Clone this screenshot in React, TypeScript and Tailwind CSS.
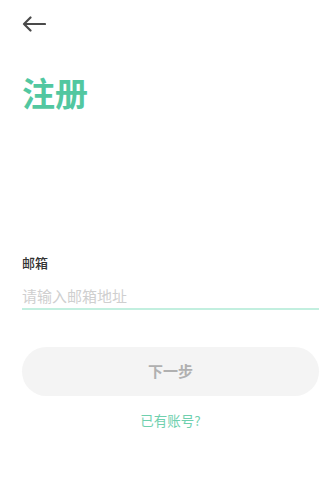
import { useState } from "react";

export default function App() {
  const [email, setEmail] = useState("");

  return (
    <div
      className="min-h-screen bg-white pl-[22px] pr-[15px]"
      style={{ fontFamily: '"Noto Sans CJK SC", "Noto Sans", sans-serif' }}
    >
      <div className="pt-[14px]">
        <button className="flex h-[20px] w-[26px] items-center">
          <svg width="24" height="16" viewBox="0 0 24 16" fill="none">
            <path
              d="M23 8H2M8.5 1.5L2 8l6.5 6.5"
              stroke="#4a4a4a"
              strokeWidth="2.2"
              strokeLinecap="round"
              strokeLinejoin="round"
            />
          </svg>
        </button>
      </div>

      <h1 className="mt-[36px] text-[33px] font-bold leading-[44px] text-[#52c7a0]">注册</h1>

      <div className="mt-[140px]">
        <label className="block text-[13px] font-medium leading-[18px] text-[#333]">邮箱</label>
        <input
          value={email}
          onChange={(e) => setEmail(e.target.value)}
          placeholder="请输入邮箱地址"
          className="mt-[11px] block h-[25px] w-full text-[15px] text-[#333] outline-none placeholder:text-[#cfcfcf]"
        />
        <div className="h-[1.5px] w-full bg-[#c2efdf]" />
      </div>

      <button className="mt-[37px] flex h-[49px] w-full items-center justify-center rounded-full bg-[#f4f4f4] text-[15px] font-bold text-[#b0b0b0]">
        下一步
      </button>

      <p className="mt-[14px] text-center text-[13.5px] text-[#6fd0ae]">已有账号?</p>
    </div>
  );
}
